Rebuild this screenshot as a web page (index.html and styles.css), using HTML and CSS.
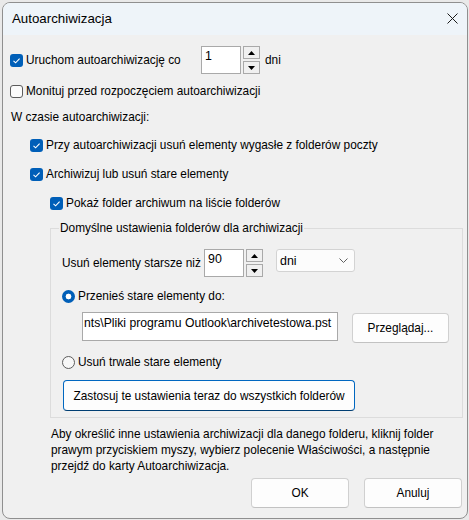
FILE: index.html
```html
<!DOCTYPE html>
<html lang="pl">
<head>
<meta charset="utf-8">
<title>Autoarchiwizacja</title>
<link rel="stylesheet" href="styles.css">
</head>
<body>
<div class="window">
  <div class="titlebar">
    <span class="title">Autoarchiwizacja</span>
    <svg class="close" width="11" height="11" viewBox="0 0 11 11"><path d="M0.5 0.5 L10.5 10.5 M10.5 0.5 L0.5 10.5" stroke="#1a1a1a" stroke-width="1" fill="none"/></svg>
  </div>
  <div class="content">
    <div class="row r1">
      <label class="check lab-r1"><span class="cb on"><svg width="13" height="13" viewBox="0 0 13 13"><path d="M3.5 6.8 L5.6 8.8 L9.6 4.6" stroke="#fff" stroke-width="1.1" fill="none"/></svg></span><span>Uruchom autoarchiwizację co</span></label>
      <div class="spin">
        <div class="spin-field">1</div>
        <div class="spin-btns">
          <div class="spin-btn"><svg width="7" height="4" viewBox="0 0 7 4"><path d="M0 4 L3.5 0 L7 4 Z" fill="#000"/></svg></div>
          <div class="spin-btn"><svg width="7" height="4" viewBox="0 0 7 4"><path d="M0 0 L3.5 4 L7 0 Z" fill="#000"/></svg></div>
        </div>
      </div>
      <span class="unit">dni</span>
    </div>
    <div class="row r2">
      <label class="check"><span class="cb off"></span><span>Monituj przed rozpoczęciem autoarchiwizacji</span></label>
    </div>
    <div class="row section">W czasie autoarchiwizacji:</div>
    <div class="row ind1 r4">
      <label class="check"><span class="cb on"><svg width="13" height="13" viewBox="0 0 13 13"><path d="M3.5 6.8 L5.6 8.8 L9.6 4.6" stroke="#fff" stroke-width="1.1" fill="none"/></svg></span><span>Przy autoarchiwizacji usuń elementy wygasłe z folderów poczty</span></label>
    </div>
    <div class="row ind1 r5">
      <label class="check"><span class="cb on"><svg width="13" height="13" viewBox="0 0 13 13"><path d="M3.5 6.8 L5.6 8.8 L9.6 4.6" stroke="#fff" stroke-width="1.1" fill="none"/></svg></span><span>Archiwizuj lub usuń stare elementy</span></label>
    </div>
    <div class="row ind2 r5">
      <label class="check"><span class="cb on"><svg width="13" height="13" viewBox="0 0 13 13"><path d="M3.5 6.8 L5.6 8.8 L9.6 4.6" stroke="#fff" stroke-width="1.1" fill="none"/></svg></span><span>Pokaż folder archiwum na liście folderów</span></label>
    </div>
    <fieldset class="group">
      <legend>Domyślne ustawienia folderów dla archiwizacji</legend>
      <div class="row age">
        <span class="lab-age">Usuń elementy starsze niż</span>
        <div class="spin">
          <div class="spin-field">90</div>
          <div class="spin-btns">
            <div class="spin-btn"><svg width="7" height="4" viewBox="0 0 7 4"><path d="M0 4 L3.5 0 L7 4 Z" fill="#000"/></svg></div>
            <div class="spin-btn"><svg width="7" height="4" viewBox="0 0 7 4"><path d="M0 0 L3.5 4 L7 0 Z" fill="#000"/></svg></div>
          </div>
        </div>
        <div class="select"><span>dni</span><svg width="9" height="5" viewBox="0 0 9 5"><path d="M0.5 0.5 L4.5 4.5 L8.5 0.5" stroke="#606060" stroke-width="1" fill="none"/></svg></div>
      </div>
      <div class="row radio-row move">
        <label class="check"><span class="radio on"></span><span>Przenieś stare elementy do:</span></label>
      </div>
      <div class="path-row">
        <div class="path">nts\Pliki programu Outlook\archivetestowa.pst</div>
        <div class="btn browse">Przeglądaj...</div>
      </div>
      <div class="row radio-row del">
        <label class="check"><span class="radio off"></span><span>Usuń trwale stare elementy</span></label>
      </div>
      <div class="btn apply">Zastosuj te ustawienia teraz do wszystkich folderów</div>
    </fieldset>
    <p class="info">Aby określić inne ustawienia archiwizacji dla danego folderu, kliknij folder<br>prawym przyciskiem myszy, wybierz polecenie Właściwości, a następnie<br>przejdź do karty Autoarchiwizacja.</p>
    <div class="actions">
      <div class="btn action">OK</div>
      <div class="btn action">Anuluj</div>
    </div>
  </div>
</div>
</body>
</html>
```
FILE: styles.css
```css
* { box-sizing: border-box; }

body {
  margin: 0;
  background: #e9e9e9;
  font-family: "Liberation Sans", Arial, sans-serif;
  font-size: 11.85px;
  color: #000;
}

.window {
  margin: 2px 0 0 2px;
  width: 466px;
  height: 517px;
  border: 1px solid #8f8f8f;
  border-radius: 8px;
  background: #f0f0f0;
  overflow: hidden;
  display: flex;
  flex-direction: column;
}

.titlebar {
  height: 32px;
  flex: none;
  background: #eef4f9;
  display: flex;
  align-items: center;
  justify-content: space-between;
  padding: 0 9px 2px 9px;
}

.title { font-size: 13.3px; }

.content {
  padding: 11px 0 0 7px;
  display: flex;
  flex-direction: column;
}

.row {
  display: flex;
  align-items: center;
  height: 22px;
}

.r1 { height: 28px; }
.r2 { margin-top: 6px; }
.section { margin-top: 4px; padding-left: 1px; }
.r4 { margin-top: 6px; }
.r5 { margin-top: 7px; }
.ind1 { padding-left: 20px; }
.ind2 { padding-left: 40px; }

.check {
  display: flex;
  align-items: center;
  gap: 3px;
}

.lab-r1 { width: 191px; }

.cb {
  width: 13px;
  height: 13px;
  border-radius: 3px;
  flex: none;
  display: flex;
}

.cb.on { background: #005fb8; }
.cb.off { border: 1px solid #5c5c5c; background: #fbfbfb; }

.radio {
  width: 13px;
  height: 13px;
  border-radius: 50%;
  flex: none;
}

.radio.on { background: radial-gradient(circle, #fff 0 2.6px, #005fb8 3.2px); }
.radio.off { border: 1px solid #5c5c5c; background: #f7f7f7; }

.spin {
  display: flex;
  gap: 2px;
  height: 28px;
  align-self: flex-start;
}

.spin-field {
  width: 40px;
  height: 28px;
  border: 1px solid #a9a9a9;
  background: #fff;
  padding: 1px 3px;
  line-height: 16px;
  font-size: 12.4px;
}

.spin-btns {
  display: flex;
  flex-direction: column;
  gap: 2px;
}

.spin-btn {
  width: 17px;
  height: 13px;
  border: 1px solid #a9a9a9;
  background: #f0f0f0;
  display: flex;
  align-items: center;
  justify-content: center;
}

.unit { margin-left: 5px; }

.group {
  margin: 6px 0 0 40px;
  width: 413px;
  border: 1px solid #dcdcdc;
  padding: 0 0 6px 11px;
  min-width: 0;
}

.group legend {
  margin-left: -3px;
  padding: 0 1px;
  line-height: 16px;
}

.age { height: 28px; margin-top: 13px; align-items: flex-start; }
.age .lab-age { width: 142px; line-height: 28px; }

.select {
  margin-left: 13px;
  width: 79px;
  height: 23px;
  border: 1px solid #d3d3d3;
  border-radius: 3px;
  background: #fcfcfc;
  display: flex;
  align-items: center;
  justify-content: space-between;
  padding: 0 6px 0 3px;
  font-size: 12.4px;
}

.move { margin-top: 8px; }
.del { margin-top: 8px; }

.path-row {
  display: flex;
  align-items: flex-start;
  gap: 14px;
  margin-top: 5px;
  padding-left: 20px;
  height: 31px;
}

.path {
  width: 256px;
  height: 29px;
  border: 1px solid #a9a9a9;
  background: #fff;
  padding: 2px 0 0 1px;
  line-height: 16px;
  white-space: nowrap;
  overflow: hidden;
  font-size: 12.2px;
}

.btn {
  background: #fdfdfd;
  border: 1px solid #d0d0d0;
  border-bottom-color: #c2c2c2;
  border-radius: 4px;
  display: flex;
  align-items: center;
  justify-content: center;
}

.browse {
  width: 97px;
  height: 30px;
  margin-top: 1px;
}

.apply {
  margin: 7px 0 0 1px;
  width: 292px;
  height: 31px;
  border-color: #0067c0;
  border-bottom-color: #003e73;
}

.info {
  margin: 8px 0 0 41px;
  line-height: 16px;
}

.actions {
  display: flex;
  justify-content: flex-end;
  gap: 15px;
  margin-top: 4px;
  padding-right: 5px;
}

.action {
  width: 98px;
  height: 30px;
}
```
